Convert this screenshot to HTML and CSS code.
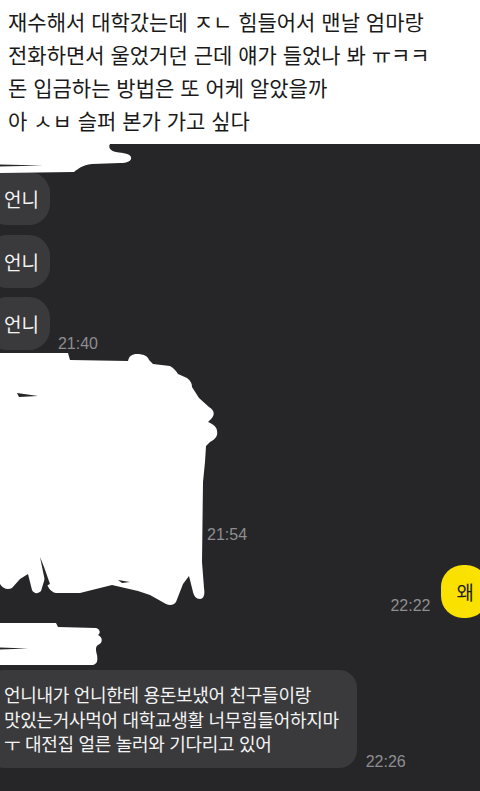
FILE: index.html
```html
<!DOCTYPE html>
<html lang="ko">
<head>
<meta charset="utf-8">
<title>chat</title>
<link rel="stylesheet" href="styles.css">
</head>
<body>
<div class="post">
  <p class="post-line">재수해서 대학갔는데 ㅈㄴ 힘들어서 맨날 엄마랑</p>
  <p class="post-line">전화하면서 울었거던 근데 얘가 들었나 봐 ㅠㅋㅋ</p>
  <p class="post-line">돈 입금하는 방법은 또 어케 알았을까</p>
  <p class="post-line">아 ㅅㅂ 슬퍼 본가 가고 싶다</p>
</div>
<div class="chat">
  <div class="redact redact-top">
    <svg class="redact-svg" width="140" height="30" viewBox="0 0 140 30">
      <path fill="#fff" d="M0,0 H110 C108,3 110,7 116,8 C124,9 130,10 131,13 C132,17 127,19 120,19 L92,20 C82,21 78,25 74,28 L0,29 Z"/>
      <path fill="#262628" d="M0,20.5 L43,21.4 L0,22.5 Z"/>
    </svg>
  </div>
  <div class="row">
    <div class="bubble bubble-small">언니</div>
  </div>
  <div class="row row-gap1">
    <div class="bubble bubble-small">언니</div>
  </div>
  <div class="row row-gap2">
    <div class="bubble bubble-small">언니</div>
    <span class="time time-a">21:40</span>
  </div>
  <div class="row row-hidden">
    <div class="hidden-msg"></div>
    <span class="time time-b">21:54</span>
    <svg class="scribble" width="222" height="260" viewBox="0 0 222 260">
      <path fill="#fff" d="M0,1 L68,1 L70,8 L128,9 C129,4 132,2 137,2 C143,2 148,4 149,8 L153,12 L170,14 C174,16 176,19 178,22 L187,26 C191,29 192,32 192,35 L199,46 L209,55 C214,58 215,62 212,66 L208,70 C213,72 217,75 217,79 C218,83 216,87 210,90 L206,94 L205,110 L203,130 L202,210 L204,236 C205,242 204,247 200,247 C196,247 194,244 193,240 L189,224 L183,232 L176,250 C174,253 170,254 166,252 L150,243 L138,239 L112,233 L80,241 L56,241 C50,240 47,234 45,226 L41,239 C38,242 34,242 32,238 L28,222 L20,227 L12,236 C8,238 3,237 0,232 Z"/>
      <path fill="#262628" d="M17,41 L38,44 L19,45 Z"/>
      <path fill="#262628" d="M40,205 L44,215 L50,232 L46,234 Z"/>
      <path fill="#262628" d="M118,228 L130,230 L122,231 Z"/>
    </svg>
  </div>
  <div class="row row-me">
    <span class="time time-c">22:22</span>
    <div class="bubble bubble-me">왜</div>
  </div>
  <div class="redact redact-bottom">
    <svg class="redact-svg" width="110" height="47" viewBox="0 0 110 47">
      <path fill="#fff" d="M0,2 L56,2 L58,6 L96,7 C100,8 101,12 98,14 C103,16 103,22 98,24 C95,26 96,30 97,34 C98,40 97,43 93,44 L0,44 Z"/>
      <path fill="#262628" d="M0,26.4 L28,27.4 L0,28.6 Z"/>
    </svg>
  </div>
  <div class="row row-last">
    <div class="bubble bubble-long">언니내가 언니한테 용돈보냈어 친구들이랑<br>맛있는거사먹어 대학교생활 너무힘들어하지마<br>ㅜ 대전집 얼른 놀러와 기다리고 있어</div>
    <span class="time time-d">22:26</span>
  </div>
</div>
</body>
</html>
```
FILE: styles.css
```css
html, body {
  margin: 0;
  padding: 0;
  background: #262628;
  overflow: hidden;
}
body {
  width: 480px;
  height: 791px;
  font-family: "Noto Sans CJK KR", "Noto Sans", sans-serif;
}
.post {
  background: #fff;
  padding: 5px 8px 7px;
  height: 132px;
}
.post-line {
  margin: 0;
  font-size: 21px;
  letter-spacing: 0;
  line-height: 33px;
  color: #1a1a1a;
  white-space: nowrap;
}
.chat {
  background: #262628;
  height: 647px;
  overflow: hidden;
}
.redact {
  position: relative;
}
.redact-top {
  height: 28px;
}
.redact-bottom {
  height: 47px;
  margin-top: 3px;
}
.redact-svg {
  display: block;
  overflow: visible;
}
.row {
  display: flex;
  align-items: flex-end;
}
.row-gap1 { margin-top: 10px; }
.row-gap2 { margin-top: 9px; gap: 8px; }
.bubble {
  background: #3a3a3c;
  color: #f4f4f4;
  font-size: 19px;
  line-height: 25px;
  white-space: nowrap;
}
.bubble-small {
  margin-left: -14px;
  padding: 14px 11px 14px 18px;
  border-radius: 21px;
}
.time {
  font-family: "Liberation Sans", Arial, sans-serif;
  font-size: 16px;
  line-height: 16px;
  color: #8e8e92;
  white-space: nowrap;
}
.time-a { margin-bottom: -2px; }
.row-hidden {
  position: relative;
  margin-top: 2px;
  gap: 8px;
}
.hidden-msg {
  width: 199px;
  height: 191px;
}
.time-b { margin-bottom: 0px; }
.scribble {
  position: absolute;
  left: 0;
  top: 0;
}
.row-me {
  margin-top: 22px;
  justify-content: flex-end;
  gap: 10px;
}
.bubble-me {
  background: #fae100;
  color: #1b1b1b;
  padding: 14px 14px 14px 16px;
  margin-right: -8px;
  border-radius: 22px;
}
.time-c { margin-bottom: 4px; }
.row-last {
  margin-top: 2px;
  gap: 9px;
}
.bubble-long {
  margin-left: -14px;
  padding: 12px 18px 12.5px 18px;
  line-height: 24.5px;
  font-size: 18px;
  letter-spacing: -0.3px;
  border-radius: 18px;
}
.time-d { margin-bottom: -2px; }
```
